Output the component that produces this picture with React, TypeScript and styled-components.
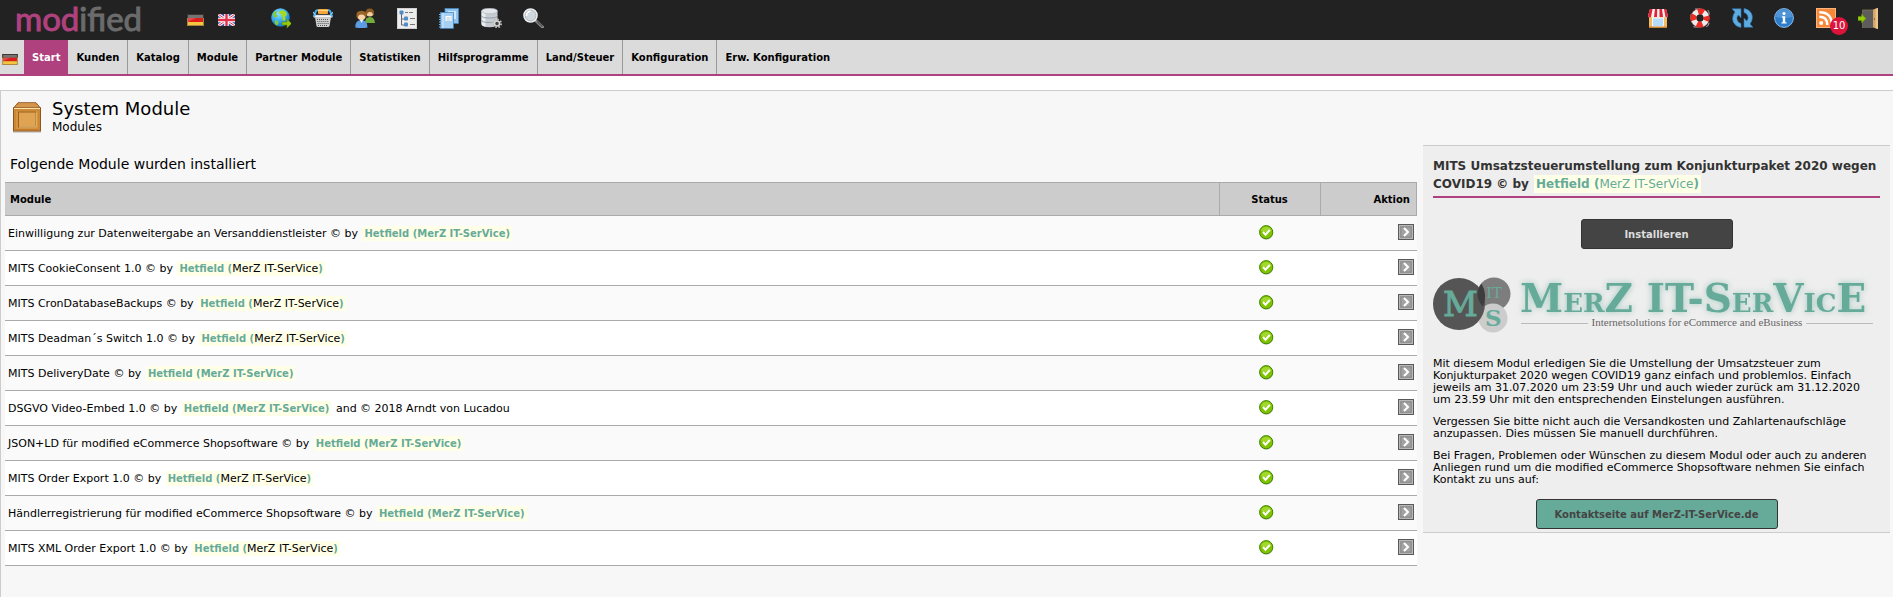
import React from "react";
import styled, { createGlobalStyle } from "styled-components";

const magenta = "#af417e";
const teal = "#66aa99";

const GlobalStyle = createGlobalStyle`
  *, *::before, *::after { box-sizing: border-box; }
  html, body, #root { height: 100%; }
  body {
    margin: 0;
    background: #fff;
    color: #000;
    font-family: Verdana, "DejaVu Sans", sans-serif;
    font-size: 11px;
    line-height: 12px;
  }
  a { color: inherit; text-decoration: none; }
  svg { display: block; }
`;

const Page = styled.div`
  min-height: 100%;
  display: flex;
  flex-direction: column;
`;

const TopBar = styled.header`
  display: flex;
  align-items: flex-start;
  height: 40px;
  padding: 0 15px;
  background: #222;
`;

const Brand = styled.a`
  width: 136px;
  flex: none;
  margin-right: 36px;
  color: ${magenta};
  font-family: Lato, sans-serif;
  font-size: 33px;
  line-height: 36px;
  -webkit-text-stroke: 1px currentColor;
  span { color: #6b6b6b; }
`;

const FlagGroup = styled.div`
  display: flex;
  gap: 14px;
  margin: 14px 36px 0 0;
`;

const IconGroup = styled.div<{ $end?: boolean }>`
  display: flex;
  gap: 22px;
  padding-top: 8px;
  margin-left: ${(p) => (p.$end ? "auto" : "0")};
`;

const IconLink = styled.a`
  position: relative;
  display: block;
  width: 20px;
  height: 20px;
`;

const Badge = styled.span`
  position: absolute;
  left: 14px;
  top: 9px;
  width: 18px;
  height: 18px;
  border-radius: 50%;
  background: #dc143c;
  color: #fff;
  font-size: 10px;
  line-height: 18px;
  text-align: center;
`;

const NavBar = styled.nav`
  display: flex;
  height: 36px;
  background: #dbdbdb;
  border-bottom: 2px solid ${magenta};
`;

const NavFlag = styled.a`
  width: 24px;
  padding: 14px 0 0 2px;
`;

const NavLink = styled.a<{ $active?: boolean; $last?: boolean }>`
  padding: 0 8px;
  border-right: ${(p) => (p.$active || p.$last ? "0" : "1px solid #999")};
  background: ${(p) => (p.$active ? magenta : "transparent")};
  color: ${(p) => (p.$active ? "#fff" : "#000")};
  font-size: 10px;
  font-weight: bold;
  line-height: 35px;
  white-space: nowrap;
`;

const Content = styled.main`
  flex: 1;
  margin-top: 14px;
  padding: 8px 3px 20px 4px;
  border: solid #ccc;
  border-width: 1px 0 0 1px;
  background: #f7f7f7;
`;

const PageHead = styled.div`
  display: flex;
  align-items: center;
  gap: 10px;
  padding-left: 7px;
`;

const PageTitle = styled.h1`
  margin: 0;
  font-size: 18px;
  font-weight: normal;
  line-height: 20px;
`;

const PageSubtitle = styled.div`
  font-size: 12px;
  line-height: 16px;
`;

const Columns = styled.div`
  display: grid;
  grid-template-columns: minmax(0, 1fr) clamp(300px, 25%, 467px);
  align-items: start;
  gap: 6px;
  margin-top: 10px;
`;

const ListHeading = styled.h2`
  margin: 0;
  padding: 10px 5px 9px;
  font-size: 14px;
  font-weight: normal;
  line-height: 18px;
`;

const ModuleTable = styled.table`
  width: 100%;
  table-layout: fixed;
  border-collapse: separate;
  border-spacing: 0;
`;

const HeadCell = styled.th<{ $align: string; $width?: string; $edge?: boolean }>`
  width: ${(p) => p.$width || "auto"};
  height: 34px;
  padding: 2px 6px 0 5px;
  border: solid #aaa;
  border-width: 1px ${(p) => (p.$edge ? "1px" : "0")} 1px ${(p) => (p.$width ? "1px" : "0")};
  background: #ccc;
  font-size: 10px;
  text-align: ${(p) => p.$align};
`;

const Row = styled.tr`
  background: #fff;
  &:nth-child(odd) { background: #fafafa; }
`;

const Cell = styled.td`
  height: 35px;
  padding: 1px 3px 0;
  border-bottom: 1px solid #aaa;
`;

const CellIcon = styled.div<{ $end?: boolean }>`
  display: flex;
  justify-content: ${(p) => (p.$end ? "flex-end" : "center")};
  padding: 0 ${(p) => (p.$end ? "0" : "6px")} 3px 0;
`;

const Author = styled.span<{ $size: string }>`
  margin: 0 1px;
  padding: 2px;
  background: #ffffe8;
  color: ${teal};
  font-size: ${(p) => p.$size};
  font-weight: bold;
`;

const Company = styled.a<{ $tone: "bold" | "plain" | "black" }>`
  color: ${(p) => (p.$tone === "black" ? "#000" : teal)};
  font-size: ${(p) => (p.$tone === "black" ? "11px" : "inherit")};
  font-weight: ${(p) => (p.$tone === "bold" ? "bold" : "normal")};
`;

const Side = styled.aside`
  display: flex;
  flex-direction: column;
  align-items: center;
  padding: 11px 10px 3px;
  border: solid #ccc;
  border-width: 1px 0;
  background: #eee;
`;

const SideTitle = styled.h3`
  width: 100%;
  margin: 0 0 21px;
  padding-bottom: 3px;
  border-bottom: 2px solid ${magenta};
  color: #333;
  font-size: 12px;
  line-height: 18px;
`;

const InstallButton = styled.button`
  width: 152px;
  height: 30px;
  border: 1px solid #333;
  border-radius: 3px;
  background: #444;
  color: #ddd;
  font: bold 10px/30px Verdana, "DejaVu Sans", sans-serif;
  padding: 0;
`;

const LogoLink = styled.a`
  align-self: flex-start;
  max-width: 100%;
  margin: 28px 0 25px;
`;

const Paragraph = styled.p`
  width: 100%;
  margin: 0 0 10px;
`;

const ContactLink = styled.a`
  width: 242px;
  height: 30px;
  margin-top: 3px;
  border: 1px solid #333;
  border-radius: 3px;
  background: ${teal};
  color: #444;
  font-size: 10px;
  font-weight: bold;
  line-height: 30px;
  text-align: center;
`;

/* ---------- drawings ---------- */

const GermanFlag = ({ small }: { small?: boolean }) => (
  <svg width={small ? 16 : 17} height={small ? 11 : 12} viewBox="0 0 17 12">
    <rect width="17" height="12" fill="#a98340" />
    <rect x="0" y="0" width="17" height="4" fill="#3a352d" />
    <rect x="1" y="1" width="15" height="3" fill="#5c5c5c" />
    <rect x="1" y="4" width="15" height="4" fill="#dd1c1c" />
    <rect x="1" y="8" width="15" height="3" fill="#f3c63d" />
    <path d="M1 1h15v3H1z" fill="#fff" opacity=".15" />
    <path d="M1 4h8L1 8z" fill="#fff" opacity=".2" />
  </svg>
);

const BritishFlag = () => (
  <svg width="17" height="12" viewBox="0 0 17 12">
    <rect width="17" height="12" fill="#3555a5" />
    <path d="M0 0l17 12M17 0L0 12" stroke="#f3f3fa" strokeWidth="3" />
    <path d="M0 0l17 12M17 0L0 12" stroke="#dd3344" strokeWidth="1" />
    <path d="M8.500 0v12M0 6h17" stroke="#fff" strokeWidth="4.500" />
    <path d="M8.500 0v12M0 6h17" stroke="#e0304a" strokeWidth="2.400" />
  </svg>
);

const Globe = () => (
  <svg width="20" height="20" viewBox="0 0 20 20">
    <defs>
      <radialGradient id="sea" cx=".4" cy=".3" r=".8">
        <stop offset="0" stopColor="#8fe0ff" /><stop offset=".5" stopColor="#36aaf0" /><stop offset="1" stopColor="#0b62b8" />
      </radialGradient>
    </defs>
    <circle cx="9.500" cy="9.500" r="9.300" fill="url(#sea)" />
    <path d="M8 4l3-2 3 1 2 2.500-.5 2-1.500 1 .5 3-1.500 1.500-1.500-1v-3L10 8l.5-2-2 0z" fill="#a4da20" />
    <path d="M2 6l2-3 2 .5-1 3 2 1.500-2 1.500-2-.5zM4 12l3 1 .5 2.500L6 17.500 4 16z" fill="#85cc33" />
    <path d="M11 14h5v-3l4.500 4.500L16 20v-3h-5z" fill="#93c90e" stroke="#5d8e00" strokeWidth=".6" />
  </svg>
);

const Basket = () => (
  <svg width="20" height="20" viewBox="0 0 20 20">
    <path d="M2 9h16l-1.500 9q-.2 1-1.500 1H5q-1.300 0-1.500-1z" fill="#cfcfcf" />
    <path d="M4 11.500h12M4.300 13.500h11.400M4.600 15.500h11M5 17.500h10" stroke="#555" strokeWidth="1" strokeDasharray="1 1" />
    <rect x=".5" y="7" width="19" height="2.500" rx="1" fill="#f5f5f5" stroke="#aaa" strokeWidth=".5" />
    <path d="M5.500 2Q3 2 2.500 4T1 8.500M14.500 2q2.500 0 3 2T19 8.500" fill="none" stroke="#43aae8" strokeWidth="2" />
    <path d="M0 4l3 4M20 4l-3 4" stroke="#8ad2fa" strokeWidth="1.200" />
    <rect x="5" y="1" width="10" height="5" rx="1" fill="#f7a63a" />
    <path d="M5 2.500h10" stroke="#ffd48c" />
  </svg>
);

const Users = () => (
  <svg width="20" height="20" viewBox="0 0 20 20">
    <path d="M10 15q0-6 5-6 4.500 0 5 6z" fill="#71ad3c" />
    <circle cx="14.800" cy="5" r="3.600" fill="#f3cfa0" />
    <path d="M10.500 6q-.5-5.500 4.300-5.500T19 6l-1 2q0-4-3-4-3 0-3 3z" fill="#8b5a25" />
    <path d="M.3 19.500Q0 12 6.500 12q6 0 6 7.500-6 1-12.200 0z" fill="#5b9ce4" />
    <path d="M5 12l1.500 3L8 12z" fill="#fff" />
    <circle cx="6.500" cy="8" r="4.200" fill="#f7d6ae" />
    <path d="M1.500 9Q.5 2.700 6.500 2.700T11.500 9l-1 2q0-4.500-4-4.500T3 11z" fill="#9b6428" />
  </svg>
);

const Tree = () => (
  <svg width="20" height="21" viewBox="0 0 20 21">
    <rect x=".5" y=".5" width="19" height="20" fill="#ededeb" stroke="#d0d0d0" />
    <path d="M4.500 6v11H8M4.500 11H8" fill="none" stroke="#667" strokeWidth="1" />
    <g fill="#4f8cc8"><rect x="2.500" y="2.500" width="4" height="4" rx="1" /><rect x="7" y="8.500" width="4" height="4" rx="1" /><rect x="7" y="14.500" width="4" height="4" rx="1" /></g>
    <path d="M8 4.500h3M12 4.500h4M13 10.500h5M13 16.500h5" stroke="#777" strokeWidth="1" />
  </svg>
);

const Books = () => (
  <svg width="20" height="21" viewBox="0 0 20 21">
    <rect x="6" y=".5" width="13.500" height="15" fill="#8fc4f0" stroke="#4289c4" strokeWidth=".7" />
    <path d="M9 3h8v8H9z" fill="#cfe7fa" />
    <rect x="1.500" y="4.500" width="13" height="16" fill="#a5d0f4" stroke="#397fb9" strokeWidth=".7" />
    <path d="M6.500 8h6v5h-6z" fill="#fff" />
    <path d="M7.500 10h4M7.500 12h4" stroke="#9ab" strokeWidth=".7" />
    <path d="M4 5v15" stroke="#d6ecfc" strokeWidth="1" />
    <path d="M0 6.500h3M0 9h3M0 11.500h3M0 14h3M0 16.500h3M0 19h3" stroke="#7fb6e2" strokeWidth="1" />
  </svg>
);

const Database = () => (
  <svg width="21" height="20" viewBox="0 0 21 20">
    <path d="M.5 3v13q0 3 8 3.200 8-.2 8-3.200V3z" fill="#c7ccd3" />
    <path d="M.5 3v13q0 2 4 2.800V3z" fill="#e9edf1" />
    <ellipse cx="8.500" cy="3" rx="8" ry="2.800" fill="#e3e7ec" stroke="#aab0b9" strokeWidth=".6" />
    <path d="M.5 7.500q0 2.500 8 2.500t8-2.500M.5 12q0 2.500 8 2.500t8-2.500" fill="none" stroke="#8f98a4" strokeWidth=".9" />
    <circle cx="16" cy="15.500" r="4" fill="none" stroke="#bbb" strokeWidth="2" strokeDasharray="1.600 1.500" />
    <circle cx="16" cy="15.500" r="2.500" fill="#444" stroke="#d6d6d6" strokeWidth="1.500" />
  </svg>
);

const Magnifier = () => (
  <svg width="21" height="20" viewBox="0 0 21 20">
    <path d="M12.500 12.500l7 6.500" stroke="#898989" strokeWidth="3" strokeLinecap="round" />
    <path d="M14 13.500l5.500 5" stroke="#555" strokeWidth="1.500" />
    <circle cx="7.500" cy="7.500" r="6.500" fill="#cfd8df" stroke="#f2f2f2" strokeWidth="1.600" />
    <circle cx="7.500" cy="7.500" r="5.400" fill="none" stroke="#9aa3ab" strokeWidth=".6" />
    <path d="M3.500 8q0-4 4-5" stroke="#fff" strokeWidth="1.600" fill="none" />
  </svg>
);

const Shop = () => (
  <svg width="20" height="20" viewBox="0 0 20 20">
    <rect x="1" y="8" width="18" height="12" fill="#f5b963" />
    <rect x="4.500" y="10" width="11" height="8.500" fill="#b5dcfa" stroke="#fff" strokeWidth=".8" />
    <path d="M1 18.500h18V20H1z" fill="#c8842f" />
    <path d="M2 1h16l2 7q-1 2.500-3 1-2 1.500-3.500 0-2 1.500-3.500 0-1.500 1.500-3.500 0-1.500 1.500-3.500 0Q1 10.500 0 8z" fill="#f3f1f1" />
    <path d="M2 1h2.500L3 9Q1 10.500 0 8zM7 1h2.200L9 9H6zM11.500 1H14l1 8h-3.500zM16 1h2l2 7q-.8 2-2.500 1z" fill="#e02234" />
  </svg>
);

const LifeBuoy = () => (
  <svg width="20" height="20" viewBox="0 0 20 20">
    <rect x="1" y="1" width="18" height="18" rx="4" fill="none" stroke="#a9b0b3" strokeWidth="1" strokeDasharray="5 8" />
    <circle cx="10" cy="10" r="6.500" fill="none" stroke="#ececec" strokeWidth="6" />
    <circle
      cx="10" cy="10" r="6.500" fill="none" stroke="#ee2b22" strokeWidth="6"
      strokeDasharray="5.600 4.610" strokeDashoffset="2.800"
    />
    <circle cx="10" cy="10" r="9.500" fill="none" stroke="#8f2a28" strokeWidth=".5" />
    <circle cx="10" cy="10" r="3.400" fill="#222" />
  </svg>
);

const Refresh = () => (
  <svg width="21" height="20" viewBox="0 0 21 20">
    <g fill="#5dabe0" stroke="#2c78b5" strokeWidth=".6">
      <path d="M0 .8h9v9L6.300 7Q3.500 10 6 13.500q1.200 1.500 3 2v4Q4 19 1.500 14.500-.8 9 3 4z" />
      <path d="M21 19.200h-9v-9l2.700 2.800q2.800-3 .3-6.500-1.200-1.500-3-2v-4q5 .5 7.500 5 2.300 5.500-1.500 10.500z" />
    </g>
  </svg>
);

const Info = () => (
  <svg width="20" height="20" viewBox="0 0 20 20">
    <circle cx="10" cy="10" r="9.400" fill="#2d7cc9" stroke="#8dbde9" strokeWidth="1" />
    <path d="M2 9q0-7 8-7t8 7q-8 2-16 0z" fill="#64a5e0" opacity=".6" />
    <circle cx="10" cy="5.500" r="1.500" fill="#fff" />
    <path d="M8 8.300h3.200v6H12.500v1.300h-5v-1.300h1.300V9.600H8z" fill="#fff" />
  </svg>
);

const Feed = () => (
  <svg width="20" height="20" viewBox="0 0 20 20">
    <rect x=".5" y=".5" width="19" height="19" fill="#f5893b" stroke="#ffb27a" />
    <circle cx="5.200" cy="15" r="2" fill="#fff" />
    <path d="M3.300 8.800q8 0 8 8.200M3.300 4.300q12.500 0 12.500 12.700" fill="none" stroke="#fff" strokeWidth="2.400" />
  </svg>
);

const Exit = () => (
  <svg width="21" height="21" viewBox="0 0 21 21">
    <path d="M5 2h10v18H5z" fill="#5d5d5d" />
    <path d="M4.500 20V2H15" fill="none" stroke="#8c7655" strokeWidth=".8" />
    <path d="M15 1.500l5-1.500v21l-5-1.500z" fill="#d4a366" />
    <path d="M17.500.8L20 0v21l-2.500-.8z" fill="#ecc58c" />
    <circle cx="16.500" cy="11" r=".7" fill="#654" />
    <path d="M0 8.500h3.500V6L8 10.500 3.500 15v-2.500H0z" fill="#95cc0a" stroke="#5d8b00" strokeWidth=".6" />
  </svg>
);

const Crate = () => (
  <svg width="30" height="31" viewBox="0 0 30 31">
    <path d="M1 30h28" stroke="#999" strokeWidth="1.500" opacity=".5" />
    <path d="M6 .7h18L28.500 6h-27z" fill="#c98638" stroke="#8e5520" strokeWidth=".9" />
    <path d="M6.500 2h17M4 4h22" stroke="#e6b06c" strokeWidth=".8" />
    <rect x="1.500" y="6" width="27" height="23" fill="#d6943f" stroke="#8e5520" />
    <path d="M2 6.500h26" stroke="#ffe1ae" strokeWidth="1.200" />
    <rect x="3" y="8" width="24" height="19.500" fill="none" stroke="#bd7829" strokeWidth=".8" />
    <rect x="6.500" y="10" width="17" height="15" fill="#dfa352" stroke="#99601f" />
    <path d="M7 25h17V10.500" fill="none" stroke="#f8cf8e" strokeWidth=".8" />
  </svg>
);

const StatusOk = () => (
  <svg width="15" height="15" viewBox="0 0 15 15" role="img" aria-label="Aktiv">
    <circle cx="7.200" cy="8" r="6.800" fill="#c8ccc2" />
    <circle cx="7.200" cy="7.200" r="6.600" fill="#80c400" stroke="#3f8500" strokeWidth="1" />
    <path d="M2 6q1-4 5.200-4t5.200 4q-5 2-10.400 0z" fill="#b9e54a" opacity=".6" />
    <path d="M4 7l2.500 2.700L10.800 5" fill="none" stroke="#fff" strokeWidth="2" />
  </svg>
);

const ArrowBox = () => (
  <svg width="16" height="16" viewBox="0 0 16 16">
    <rect x=".5" y=".5" width="15" height="15" fill="#999" stroke="#595959" />
    <rect x="1.500" y="1.500" width="13" height="13" fill="none" stroke="#b8b8b8" />
    <rect x="3" y="3" width="10" height="10" fill="#a2a2a2" stroke="#868686" strokeWidth=".7" />
    <path d="M6 4l4 4-4 4" fill="none" stroke="#fff" strokeWidth="2" />
  </svg>
);

const LogoSvg = styled.svg`
  max-width: 100%;
  overflow: visible;
  font-family: "DejaVu Serif", serif;
  .word {
    fill: ${teal};
    font-weight: bold;
    filter: drop-shadow(0 0 3px rgba(102, 170, 153, 0.6));
  }
  .mark { fill: ${teal}; }
  .claim { fill: #666; font-family: "Liberation Serif", serif; }
`;

const MerzLogo = () => (
  <LogoSvg width="442" height="56" viewBox="0 0 442 56" role="img" aria-label="MerZ IT-SerVice">
    <circle cx="61" cy="17" r="16.500" fill="#7d7d7d" />
    <circle cx="60" cy="41" r="14.500" fill="#ccc" />
    <circle cx="26" cy="27" r="26" fill="#555" />
    <path d="M48.500 6.500A16.500 16.500 0 0 0 50 29.500 26 26 0 0 0 48.500 6.500z" fill="#3d3d3d" />
    <g className="mark">
      <text x="10" y="39" fontSize="34" stroke={teal}>M</text>
      <text x="53" y="21" fontSize="15">IT</text>
      <text x="52" y="49" fontSize="23" fontWeight="bold">S</text>
    </g>
    <text className="word" x="87" y="35" fontSize="39">
      M<tspan fontSize="26">ER</tspan>Z <tspan>IT-S</tspan><tspan fontSize="26">ER</tspan>V<tspan fontSize="26">IC</tspan>E
    </text>
    <path d="M88 46.500h67M373 46.500h67" stroke="#bbb" />
    <text className="claim" x="264" y="49" fontSize="11" textAnchor="middle">Internetsolutions for eCommerce and eBusiness</text>
  </LogoSvg>
);

/* ---------- data ---------- */

const tools = [
  { label: "Shop", icon: <Globe /> },
  { label: "Bestellungen", icon: <Basket /> },
  { label: "Kunden", icon: <Users /> },
  { label: "Kategorien", icon: <Tree /> },
  { label: "Content Manager", icon: <Books /> },
  { label: "Datenbank", icon: <Database /> },
  { label: "Suche", icon: <Magnifier /> },
];

const services = [
  { label: "Marktplatz", icon: <Shop /> },
  { label: "Hilfe", icon: <LifeBuoy /> },
  { label: "Aktualisieren", icon: <Refresh /> },
  { label: "Info", icon: <Info /> },
  { label: "News", icon: <Feed />, count: 10 },
  { label: "Abmelden", icon: <Exit /> },
];

const menu = [
  "Start", "Kunden", "Katalog", "Module", "Partner Module", "Statistiken",
  "Hilfsprogramme", "Land/Steuer", "Konfiguration", "Erw. Konfiguration",
];

type Tone = "bold" | "black";
const modules: { name: string; tone: Tone; after?: string }[] = [
  { name: "Einwilligung zur Datenweitergabe an Versanddienstleister", tone: "bold" },
  { name: "MITS CookieConsent 1.0", tone: "black" },
  { name: "MITS CronDatabaseBackups", tone: "black" },
  { name: "MITS Deadman´s Switch 1.0", tone: "black" },
  { name: "MITS DeliveryDate", tone: "bold" },
  { name: "DSGVO Video-Embed 1.0", tone: "bold", after: "and © 2018 Arndt von Lucadou" },
  { name: "JSON+LD für modified eCommerce Shopsoftware", tone: "bold" },
  { name: "MITS Order Export 1.0", tone: "black" },
  { name: "Händlerregistrierung für modified eCommerce Shopsoftware", tone: "bold" },
  { name: "MITS XML Order Export 1.0", tone: "black" },
];

const Credit = ({ tone, size = "10px" }: { tone: "bold" | "plain" | "black"; size?: string }) => (
  <Author $size={size}>Hetfield (<Company href="#" $tone={tone}>MerZ IT-SerVice</Company>)</Author>
);

export default function App() {
  return (
    <Page>
      <GlobalStyle />
      <TopBar>
        <Brand href="#">mod<span>ified</span></Brand>
        <FlagGroup>
          <a href="#" aria-label="Deutsch"><GermanFlag /></a>
          <a href="#" aria-label="English"><BritishFlag /></a>
        </FlagGroup>
        <IconGroup>
          {tools.map((t) => <IconLink key={t.label} href="#" aria-label={t.label}>{t.icon}</IconLink>)}
        </IconGroup>
        <IconGroup $end>
          {services.map((s) => (
            <IconLink key={s.label} href="#" aria-label={s.label}>
              {s.icon}
              {s.count && <Badge>{s.count}</Badge>}
            </IconLink>
          ))}
        </IconGroup>
      </TopBar>
      <NavBar>
        <NavFlag href="#" aria-label="Sprache"><GermanFlag small /></NavFlag>
        {menu.map((m, i) => (
          <NavLink key={m} href="#" $active={i === 0} $last={i === menu.length - 1}>{m}</NavLink>
        ))}
      </NavBar>
      <Content>
        <PageHead>
          <Crate />
          <div>
            <PageTitle>System Module</PageTitle>
            <PageSubtitle>Modules</PageSubtitle>
          </div>
        </PageHead>
        <Columns>
          <section>
            <ListHeading>Folgende Module wurden installiert</ListHeading>
            <ModuleTable>
              <thead>
                <tr>
                  <HeadCell $align="left">Module</HeadCell>
                  <HeadCell $align="center" $width="101px">Status</HeadCell>
                  <HeadCell $align="right" $width="97px" $edge>Aktion</HeadCell>
                </tr>
              </thead>
              <tbody>
                {modules.map((m) => (
                  <Row key={m.name}>
                    <Cell>{m.name} © by <Credit tone={m.tone} /> {m.after}</Cell>
                    <Cell><CellIcon><StatusOk /></CellIcon></Cell>
                    <Cell><CellIcon $end><a href="#" aria-label={m.name}><ArrowBox /></a></CellIcon></Cell>
                  </Row>
                ))}
              </tbody>
            </ModuleTable>
          </section>
          <Side>
            <SideTitle>
              MITS Umsatzsteuerumstellung zum Konjunkturpaket 2020 wegen COVID19 © by <Credit tone="plain" size="12px" />
            </SideTitle>
            <InstallButton type="button">Installieren</InstallButton>
            <LogoLink href="#"><MerzLogo /></LogoLink>
            <Paragraph>
              Mit diesem Modul erledigen Sie die Umstellung der Umsatzsteuer zum Konjukturpaket 2020 wegen COVID19 ganz
              einfach und problemlos. Einfach jeweils am 31.07.2020 um 23:59 Uhr und auch wieder zurück am 31.12.2020 um
              23.59 Uhr mit den entsprechenden Einstelungen ausführen.
            </Paragraph>
            <Paragraph>
              Vergessen Sie bitte nicht auch die Versandkosten und Zahlartenaufschläge anzupassen. Dies müssen Sie
              manuell durchführen.
            </Paragraph>
            <Paragraph>
              Bei Fragen, Problemen oder Wünschen zu diesem Modul oder auch zu anderen Anliegen rund um die modified
              eCommerce Shopsoftware nehmen Sie einfach Kontakt zu uns auf:
            </Paragraph>
            <ContactLink href="#">Kontaktseite auf MerZ-IT-SerVice.de</ContactLink>
          </Side>
        </Columns>
      </Content>
    </Page>
  );
}
